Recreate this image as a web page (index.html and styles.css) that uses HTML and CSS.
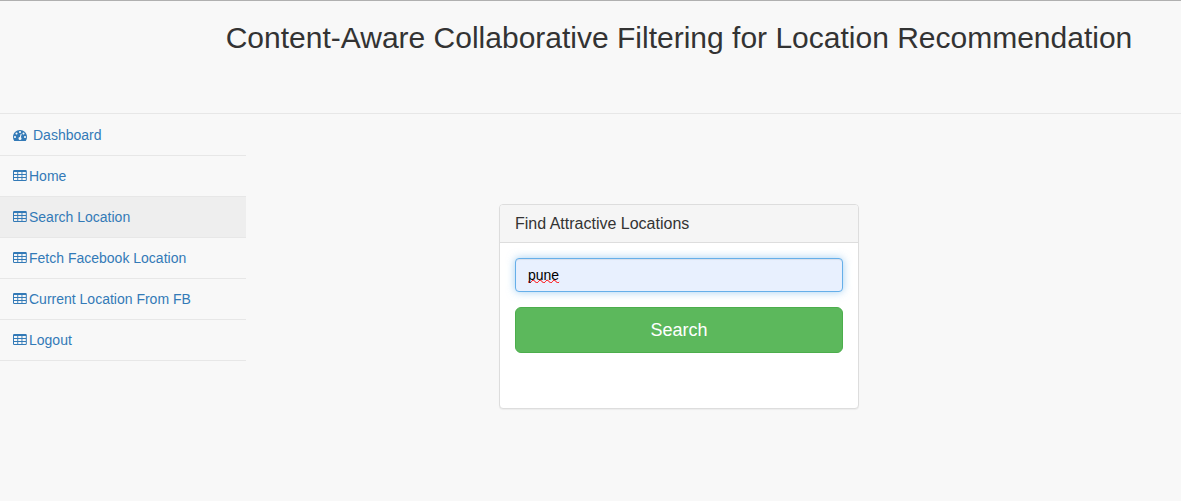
FILE: index.html
```html
<!DOCTYPE html>
<html lang="en">
<head>
<meta charset="utf-8">
<title>Search Location</title>
<link rel="stylesheet" href="styles.css">
</head>
<body>
<svg class="sprite" aria-hidden="true">
  <symbol id="icon-dashboard" viewBox="0 0 1792 1792"><path d="M384 1152q0-53-37.500-90.500t-90.500-37.500-90.500 37.500-37.500 90.500 37.500 90.500 90.500 37.500 90.500-37.500 37.500-90.500zm192-448q0-53-37.500-90.500t-90.500-37.500-90.500 37.500-37.500 90.500 37.500 90.500 90.500 37.500 90.500-37.500 37.500-90.500zm428 481l101-382q6-26-7.500-48.500t-38.500-29.500-48 6.500-30 39.500l-101 382q-60 5-107 43.500t-63 98.500q-20 77 20 146t117 89 146-20 89-117q16-60-6-117t-72-91zm660-33q0-53-37.500-90.500t-90.500-37.500-90.500 37.500-37.500 90.500 37.500 90.500 90.500 37.500 90.500-37.500 37.500-90.500zm-640-640q0-53-37.500-90.500t-90.500-37.500-90.500 37.500-37.500 90.500 37.500 90.500 90.500 37.500 90.500-37.500 37.500-90.500zm448 192q0-53-37.500-90.500t-90.500-37.500-90.500 37.500-37.500 90.500 37.500 90.500 90.500 37.500 90.500-37.500 37.500-90.500zm320 448q0 261-141 483-19 29-54 29h-1402q-35 0-54-29-141-221-141-483 0-182 71-348t191-286 286-191 348-71 348 71 286 191 191 286 71 348z"/></symbol>
  <symbol id="icon-table" viewBox="0 0 14 14"><path fill-rule="evenodd" d="M1.200 1h11.400q1.200 0 1.200 1.200v8.600q0 1.200-1.200 1.200h-11.400q-1.200 0-1.200-1.200v-8.600q0-1.200 1.200-1.200zM1 3v2h3.300v-2zM5.200 3v2h3.300v-2zM9.400 3v2h3.400v-2zM1 6v2h3.300v-2zM5.200 6v2h3.300v-2zM9.400 6v2h3.400v-2zM1 9v2h3.300v-2zM5.200 9v2h3.300v-2zM9.400 9v2h3.400v-2z"/></symbol>
</svg>
<header class="header">
  <h1 class="title">Content-Aware Collaborative Filtering for Location Recommendation</h1>
</header>
<div class="layout">
  <nav class="sidebar">
    <ul class="menu">
      <li class="menu-item"><a class="menu-link menu-link-spaced" href="#"><svg class="icon" aria-hidden="true"><use href="#icon-dashboard"/></svg>Dashboard</a></li>
      <li class="menu-item"><a class="menu-link" href="#"><svg class="icon" aria-hidden="true"><use href="#icon-table"/></svg>Home</a></li>
      <li class="menu-item"><a class="menu-link active" href="#"><svg class="icon" aria-hidden="true"><use href="#icon-table"/></svg>Search Location</a></li>
      <li class="menu-item"><a class="menu-link" href="#"><svg class="icon" aria-hidden="true"><use href="#icon-table"/></svg>Fetch Facebook Location</a></li>
      <li class="menu-item"><a class="menu-link" href="#"><svg class="icon" aria-hidden="true"><use href="#icon-table"/></svg>Current Location From FB</a></li>
      <li class="menu-item"><a class="menu-link" href="#"><svg class="icon" aria-hidden="true"><use href="#icon-table"/></svg>Logout</a></li>
    </ul>
  </nav>
  <main class="main">
    <section class="panel">
      <h2 class="panel-heading"><label for="location">Find Attractive Locations</label></h2>
      <form class="panel-body">
        <input class="field" id="location" type="text" value="pune">
        <button class="button" type="button">Search</button>
      </form>
    </section>
  </main>
</div>
</body>
</html>
```
FILE: styles.css
```css
* {
  box-sizing: border-box;
}

body {
  margin: 0;
  border-top: 1px solid #b0b0b0;
  background: #f8f8f8;
  color: #333;
  font: 14px/20px "Liberation Sans", Arial, sans-serif;
}

.sprite {
  display: none;
}

.header {
  padding: 20px 0 59px 177px;
  border-bottom: 1px solid #e7e7e7;
}

.title {
  margin: 0;
  font-size: 30px;
  font-weight: 400;
  line-height: 33px;
  text-align: center;
}

.layout {
  display: flex;
  align-items: flex-start;
}

.sidebar {
  flex: 0 0 246px;
}

.menu {
  margin: 0;
  padding: 0;
  list-style: none;
}

.menu-item {
  border-bottom: 1px solid #e7e7e7;
}

.menu-link {
  display: flex;
  align-items: center;
  gap: 2px;
  padding: 10px 13px;
  color: #337ab7;
  text-decoration: none;
}

.menu-link-spaced {
  gap: 6px;
  padding-top: 11px;
}

.menu-link.active {
  background: #eee;
}

.icon {
  width: 14px;
  height: 14px;
  fill: currentColor;
}

.main {
  flex: 1;
  display: flex;
  justify-content: center;
  padding: 90px 69px 40px 0;
}

.panel {
  flex: 0 1 360px;
  border: 1px solid #ddd;
  border-radius: 4px;
  background: #fff;
  box-shadow: 0 1px 1px rgba(0, 0, 0, 0.05);
}

.panel-heading {
  margin: 0;
  padding: 10px 15px;
  border-bottom: 1px solid #ddd;
  border-radius: 3px 3px 0 0;
  background: #f5f5f5;
  font-size: 16px;
  font-weight: 400;
  line-height: 17px;
}

.panel-body {
  display: flex;
  flex-direction: column;
  gap: 15px;
  padding: 15px 15px 55px;
}

.field {
  width: 100%;
  height: 34px;
  padding: 4px 12px;
  border: 1px solid #66afe9;
  border-radius: 4px;
  outline: 0;
  background: #e8f0fe;
  box-shadow: inset 0 1px 1px rgba(0, 0, 0, 0.075), 0 0 8px rgba(102, 175, 233, 0.6);
  color: #000;
  font: inherit;
  line-height: 24px;
  text-decoration: underline wavy #f00 1px;
  text-decoration-skip-ink: none;
  text-underline-offset: -1px;
}

.button {
  padding: 10px 16px;
  border: 1px solid #4cae4c;
  border-radius: 6px;
  background: #5cb85c;
  color: #fff;
  font: inherit;
  font-size: 18px;
  line-height: 24px;
}
```
